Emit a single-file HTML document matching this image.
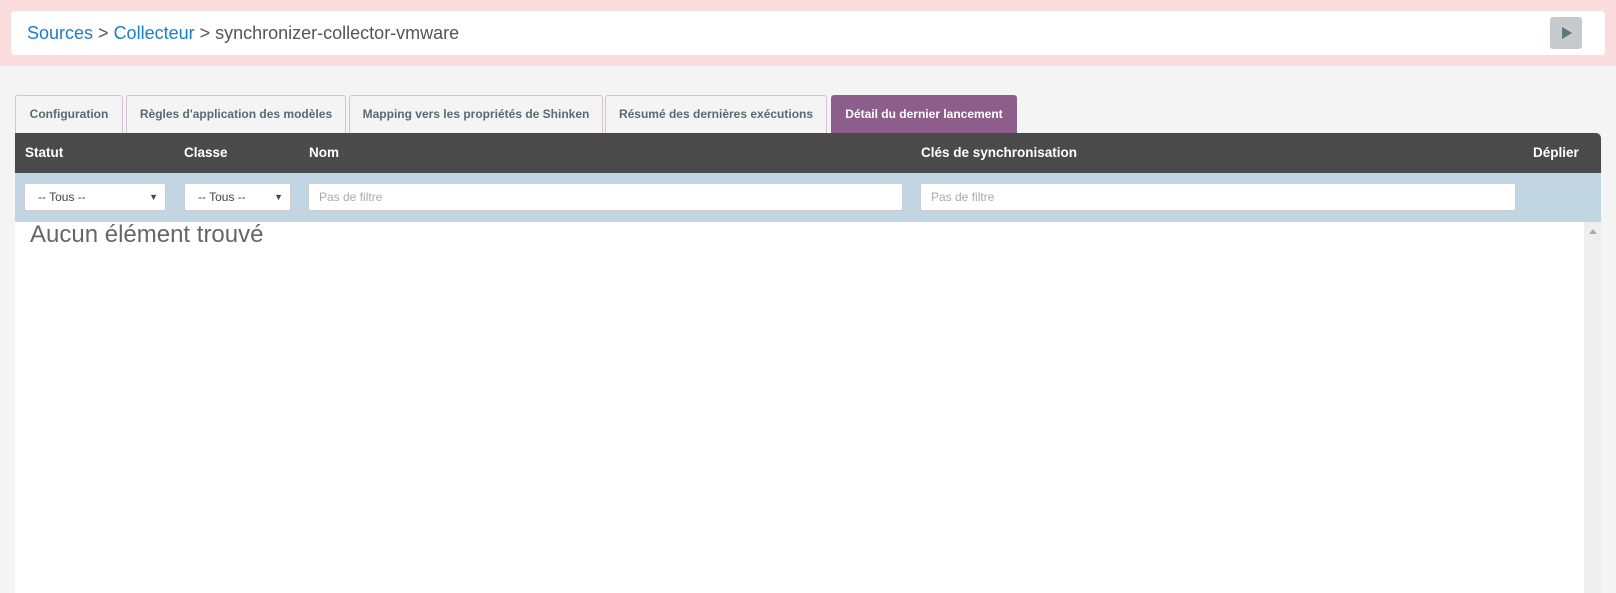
<!DOCTYPE html>
<html><head><meta charset="utf-8"><style>
*{box-sizing:border-box;margin:0;padding:0}
body{width:1616px;height:593px;overflow:hidden;background:#f4f4f4;font-family:"Liberation Sans",Arial,sans-serif;position:relative}
.pink{position:absolute;left:0;top:0;width:1616px;height:66px;background:#fbdddd}
.bc{position:absolute;left:11px;top:11px;width:1594px;height:44px;background:#fff;border-radius:4px;font-size:18px;line-height:44px;padding-left:16px;color:#555}
.bc a{color:#1e7cc8;text-decoration:none}
.play{position:absolute;left:1550px;top:17px;width:32px;height:32px;background:#c5cacd;border-radius:3px}
.play:after{content:"";position:absolute;left:12px;top:10px;border-left:10px solid #5f7682;border-top:6px solid transparent;border-bottom:6px solid transparent}
.tab{position:absolute;top:95px;height:38px;border:1px solid #d6c4d4;border-bottom:none;border-radius:3px 3px 0 0;background:#f4f4f4;font-size:12px;font-weight:bold;color:#5a6a72;text-align:center;line-height:36px}
.tab.act{background:#8e5e8a;color:#fff;border-color:#8e5e8a}
.hdr{position:absolute;left:15px;top:133px;width:1586px;height:40px;background:#4a4a4a;border-radius:0 5px 0 0;color:#fff;font-size:13.5px;font-weight:bold}
.hdr span{position:absolute;top:12px}
.flt{position:absolute;left:15px;top:173px;width:1586px;height:49px;background:#c1d6e2}
.inp{position:absolute;top:10px;height:28px;background:#fff;border:1px solid #ccc;border-radius:2px;font-size:12px;line-height:26px;color:#444;padding-left:13px}
.inp.ph{color:#aaa;padding-left:10px}
.inp .ar{position:absolute;right:7px;top:0;font-size:9px;color:#444}
.body{position:absolute;left:15px;top:222px;width:1569px;height:371px;background:#fff}
.msg{position:absolute;left:30px;top:221px;font-size:24px;color:#666}
.sb{position:absolute;left:1584px;top:222px;width:17px;height:371px;background:#efefef}
.sb:after{content:"";position:absolute;left:5px;top:7px;border-bottom:5px solid #aaa;border-left:4px solid transparent;border-right:4px solid transparent}
</style></head><body>
<div class="pink"></div>
<div class="bc"><a>Sources</a> &gt; <a>Collecteur</a> &gt; synchronizer-collector-vmware</div>
<div class="play"></div>
<div class="tab" style="left:15px;width:108px">Configuration</div>
<div class="tab" style="left:126px;width:220px">Règles d'application des modèles</div>
<div class="tab" style="left:349px;width:254px">Mapping vers les propriétés de Shinken</div>
<div class="tab" style="left:605px;width:222px">Résumé des dernières exécutions</div>
<div class="tab act" style="left:831px;width:186px">Détail du dernier lancement</div>
<div class="hdr"><span style="left:10px">Statut</span><span style="left:169px">Classe</span><span style="left:294px">Nom</span><span style="left:906px">Clés de synchronisation</span><span style="left:1518px">Déplier</span></div>
<div class="flt">
<div class="inp" style="left:9px;width:142px">-- Tous --<span class="ar">▼</span></div>
<div class="inp" style="left:169px;width:107px">-- Tous --<span class="ar">▼</span></div>
<div class="inp ph" style="left:293px;width:595px">Pas de filtre</div>
<div class="inp ph" style="left:905px;width:596px">Pas de filtre</div>
</div>
<div class="body"></div>
<div class="msg">Aucun élément trouvé</div>
<div class="sb"></div>
</body></html>
